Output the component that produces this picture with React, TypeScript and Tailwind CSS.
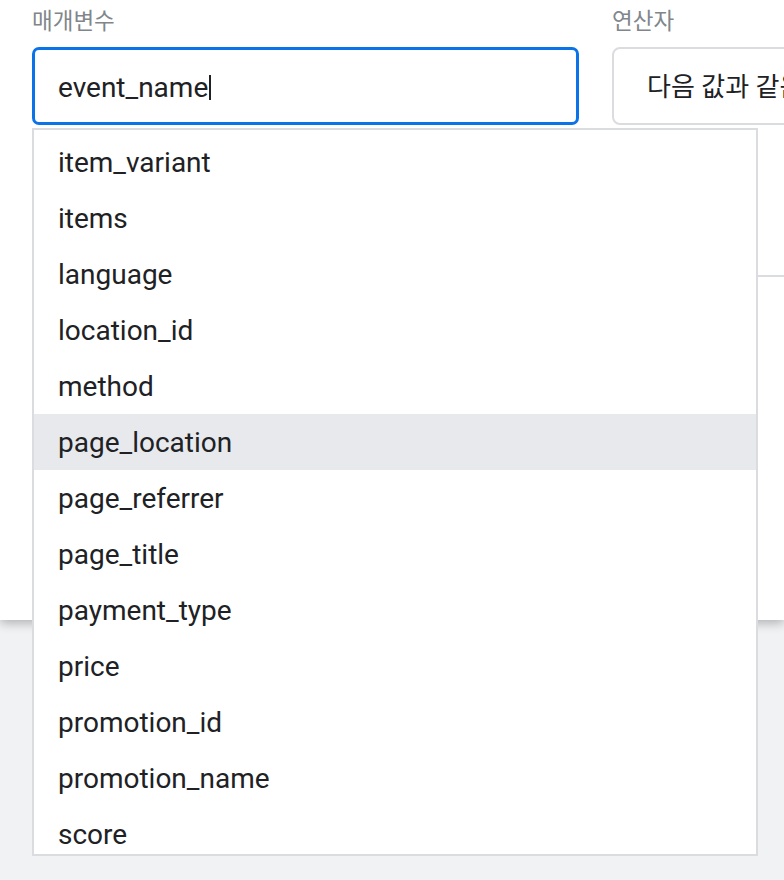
import React from "react";

const items = [
  "item_variant",
  "items",
  "language",
  "location_id",
  "method",
  "page_location",
  "page_referrer",
  "page_title",
  "payment_type",
  "price",
  "promotion_id",
  "promotion_name",
  "score",
];

export default function App() {
  return (
    <div
      className="relative w-[784px] h-[880px] overflow-hidden bg-[#f1f2f4]"
      style={{ fontFamily: 'Roboto, "Noto Sans CJK KR", sans-serif' }}
    >
      <div className="relative h-[620px] bg-white shadow-[0_3px_10px_rgba(0,0,0,0.28)]">
        <div className="flex gap-[33px] pl-[32px] pt-[6px]">
          <div className="flex w-[547px] shrink-0 flex-col">
            <div className="h-[30px] whitespace-nowrap text-[22.5px] leading-[30px] text-[#80868b]">매개변수</div>
            <div className="mt-[11px] flex h-[78px] items-center rounded-[7px] border-[3px] border-[#0b73e8] pl-[23px] pt-[3px]">
              <span className="text-[28px] leading-[34px] text-[#202124]">event_name</span>
              <span className="ml-[1px] h-[25px] w-[2px] bg-[#202124]" />
            </div>
          </div>
          <div className="flex w-[300px] shrink-0 flex-col">
            <div className="h-[30px] whitespace-nowrap text-[22.5px] leading-[30px] text-[#80868b]">연산자</div>
            <div className="mt-[11px] flex h-[78px] items-center overflow-hidden rounded-[8px] border-2 border-[#dadce0] pl-[33px] pt-[2px]">
              <span className="whitespace-nowrap text-[26px] text-[#202124]">다음 값과 같음</span>
            </div>
          </div>
        </div>
        <div className="mt-[150px] ml-[32px] h-[2px] bg-[#dadce0]" />
      </div>

      <div className="absolute left-[32px] top-[128px] h-[728px] w-[726px] overflow-hidden border-2 border-[#dadce0] bg-white">
        <div className="pt-[4px]">
          {items.map((it) => (
            <div
              key={it}
              className={
                "flex h-[56px] items-center pl-[24px] pt-[2px] text-[28px] text-[#202124] " +
                (it === "page_location" ? "bg-[#e8e9ec]" : "")
              }
            >
              {it}
            </div>
          ))}
        </div>
      </div>
    </div>
  );
}
